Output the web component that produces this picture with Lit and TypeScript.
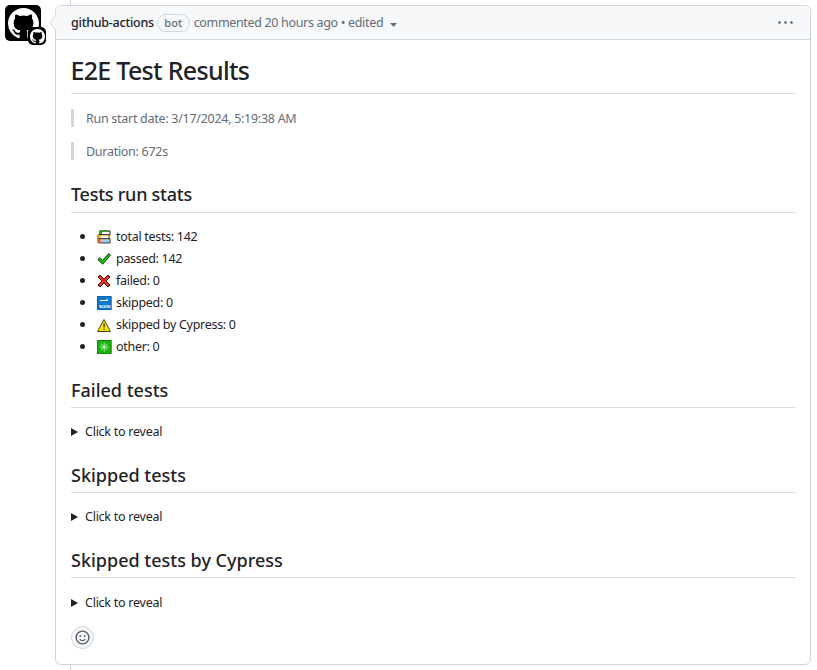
import { LitElement, html, css, svg } from "lit";
import { customElement, property } from "lit/decorators.js";

const octocat = "M8 0c4.42 0 8 3.58 8 8a8.013 8.013 0 0 1-5.45 7.59c-.4.08-.55-.17-.55-.38 0-.27.01-1.13.01-2.2 0-.75-.25-1.23-.54-1.48 1.78-.2 3.65-.88 3.65-3.95 0-.88-.31-1.59-.82-2.15.08-.2.36-1.02-.08-2.12 0 0-.67-.22-2.2.82-.64-.18-1.32-.27-2-.27-.68 0-1.36.09-2 .27-1.53-1.03-2.2-.82-2.2-.82-.44 1.1-.16 1.92-.08 2.12-.51.56-.82 1.28-.82 2.15 0 3.06 1.86 3.75 3.64 3.95-.23.2-.44.55-.51 1.07-.46.21-1.61.55-2.33-.66-.15-.24-.6-.83-1.23-.82-.67.01-.27.38.01.53.34.19.73.9.82 1.13.16.45.68 1.31 2.69.94 0 .67.01 1.3.01 1.49 0 .21-.15.45-.55.38A7.995 7.995 0 0 1 0 8c0-4.42 3.58-8 8-8Z";

const icons = {
  books: svg`<path d="M2.5 .9h10.5v4H2.5z" fill="#fff" stroke="#222"/><path d="M2 .9h3v4H2z" fill="#27a11b"/><path d="M5 1.4h8" stroke="#27a11b"/>
    <path d="M1 4.9h11v4H1z" fill="#fff" stroke="#222"/><path d="M1 5.3h3v3.2H1z" fill="#f5b82e"/><path d="M4 5.6h8" stroke="#f5b82e"/>
    <path d="M1.5 8.9H13v4H1.5z" fill="#fff" stroke="#222"/><path d="M.4 8.9h3.3v4H.4z" fill="#e8572b"/><path d="M4 11h8.5" stroke="#4e9fe0"/>`,
  check: svg`<path d="M.8 7.6 3 5.7l2.5 2.7 6.2-6.8 1.8 1.5-7.8 9.1z" fill="#16c60c" stroke="#153b13" stroke-width="1"/>`,
  cross: svg`<path d="m1 3 2-2 4 4 4-4 2 2-4 4 4 4-2 2-4-4-4 4-2-2 4-4z" fill="#e8301c" stroke="#46201b" stroke-width="1"/>`,
  soon: svg`<path d="M0 0h14.5v14H0z" fill="#0a78d0"/><path d="M.5 .5h13.5v13H.5z" fill="none" stroke="#0962ac"/>
    <path d="M3 4.5h8M9 2.7l2 1.8" fill="none" stroke="#fff"/>
    <text class="soon" x="2" y="11.8">SOON</text>`,
  warn: svg`<path d="M7 1.5 13.5 13.5H.6z" fill="#fce100" stroke="#4a4510"/><path d="M7.1 5.5v4M7.1 10.8v1.2" stroke="#222" stroke-width="1.2"/>`,
  spark: svg`<path d="M0 0h14.5v14H0z" fill="#16b60c"/><path d="M.5 .5h13.5v13H.5z" fill="none" stroke="#10870a"/>
    <path d="M7.2 2.5v9M2.7 7h9M4 3.8l6.4 6.4M10.4 3.8 4 10.2" stroke="#d9ffd5" stroke-width=".8"/>`,
};

@customElement("reveal-section")
export class RevealSection extends LitElement {
  @property() heading = "";
  static styles = css`
    :host { display: block; }
    .title { box-sizing: border-box; height: 36px; margin: 0; border-bottom: 1px solid #d8dee4;
      font-size: 18px; font-weight: 500; line-height: 36px; white-space: nowrap; letter-spacing: 0; }
    .reveal { display: flex; align-items: center; box-sizing: border-box; height: 49px; padding-bottom: 1px; }
    :host(:last-of-type) .reveal { height: 48px; padding: 1px 0 0; }
    .arrow { width: 7px; height: 8px; margin: 0 7px 0 0; fill: #1f2328; }
    .label { letter-spacing: -0.25px; }
  `;
  render() {
    return html`<h2 class="title">${this.heading}</h2>
      <div class="reveal"><svg class="arrow" viewBox="0 0 7 8"><path d="M0 0v8l7-4z" /></svg><span class="label">Click to reveal</span></div>`;
  }
}

@customElement("app-root")
export class AppRoot extends LitElement {
  static styles = css`
    :host { display: flex; box-sizing: border-box; height: 670px; padding: 5px 6px 0 5px; background: #fff; color: #1f2328;
      font: 12.5px/18px "Noto Sans", "Open Sans", sans-serif; letter-spacing: -0.3px; overflow: hidden; white-space: nowrap; }
    .avatar { position: relative; width: 36px; height: 36px; margin-right: 14px; flex: none; }
    .tile { display: flex; align-items: center; justify-content: center; width: 36px; height: 36px; border-radius: 5px; background: #000; }
    .mark { width: 31px; height: 31px; fill: #fff; }
    .badge { position: absolute; left: 23px; top: 22px; width: 18px; height: 18px; }
    .badge .mark { width: 15px; height: 15px; }
    .timeline { position: relative; flex: 1; height: 665px; }
    .line { position: absolute; left: 15px; top: -5px; width: 1px; height: 670px; background: #d0d7de; }
    .card { position: relative; box-sizing: border-box; height: 660px; border: 1px solid #d0d7de; border-radius: 6px; background: #fff; }
    .notch { position: absolute; left: -7px; top: 9px; width: 7px; height: 15px; }
    .header { display: flex; align-items: center; box-sizing: border-box; height: 34px; padding: 0 17px 0 15px;
      border-bottom: 1px solid #d0d7de; border-radius: 5px 5px 0 0; background: #f6f8fa; color: #656d76; }
    .author { color: #1f2328; font-weight: 500; letter-spacing: -0.25px; }
    .bot { box-sizing: border-box; height: 18px; margin: 0 4px 0 3px; padding: 0 6.5px; border: 1px solid #d0d7de; border-radius: 9px;
      font-size: 11px; font-weight: 500; line-height: 16px; letter-spacing: 0; }
    .when { letter-spacing: -0.33px; }
    .caret { width: 7px; height: 4px; margin: 4px 0 0 7px; fill: #656d76; }
    .dots { width: 15px; height: 3px; margin-left: auto; fill: #57606a; }
    .body { padding: 14px 14px 0 15px; }
    .h1 { box-sizing: border-box; height: 40px; margin: 0 0 15px; border-bottom: 1px solid #d8dee4; font-size: 25px; font-weight: 500; line-height: 33px; letter-spacing: -0.7px; text-indent: -0.5px; }
    .quote { box-sizing: border-box; height: 18px; margin: 0 0 15px; padding-left: 12px; border-left: 3px solid #d0d7de; color: #656d76; line-height: 20px; letter-spacing: -0.28px; }
    .h2 { box-sizing: border-box; height: 38px; margin: 0 0 13px; border-bottom: 1px solid #d8dee4; font-size: 18px; font-weight: 500; line-height: 38px; letter-spacing: -0.25px; }
    .stats { margin: 0 0 14px; padding: 0 0 0 9px; list-style: none; }
    .stat { display: flex; align-items: center; height: 22px; }
    .stat::before { content: ""; width: 5px; height: 5px; margin: 0 12px 1px 0; border-radius: 50%; background: #1f2328; }
    .icon { width: 15px; height: 14px; margin-right: 4px; }
    .soon { font: 700 4.4px "Liberation Sans", sans-serif; letter-spacing: -.5px; fill: #fff; }
    .react { display: flex; align-items: center; justify-content: center; box-sizing: border-box; width: 23px; height: 23px; border: 1px solid #d0d7de; border-radius: 50%; background: #f6f8fa; }
    .smile { width: 15px; height: 15px; fill: none; stroke: #57606a; }
  `;
  private stats = [
    { icon: icons.books, text: "total tests: 142" },
    { icon: icons.check, text: "passed: 142" },
    { icon: icons.cross, text: "failed: 0" },
    { icon: icons.soon, text: "skipped: 0" },
    { icon: icons.warn, text: "skipped by Cypress: 0" },
    { icon: icons.spark, text: "other: 0" },
  ];
  render() {
    const mark = html`<svg class="mark" viewBox="0 0 16 16"><path d=${octocat} /></svg>`;
    return html`
      <div class="avatar"><div class="tile">${mark}</div><div class="tile badge">${mark}</div></div>
      <div class="timeline">
        <div class="line"></div>
        <div class="card">
          <svg class="notch" viewBox="0 0 7 15"><path d="M7 0v15L.7 7.5z" fill="#f6f8fa" /><path d="M6.5 .5.7 7.5l5.8 7" fill="none" stroke="#d0d7de" /></svg>
          <div class="header">
            <span class="author">github-actions</span><span class="bot">bot</span>
            <span class="when">commented 20 hours ago • edited</span>
            <svg class="caret" viewBox="0 0 7 4"><path d="M0 0h7L3.5 4z" /></svg>
            <svg class="dots" viewBox="0 0 15 3"><circle cx="1.5" cy="1.5" r="1.3" /><circle cx="7.5" cy="1.5" r="1.3" /><circle cx="13.5" cy="1.5" r="1.3" /></svg>
          </div>
          <div class="body">
            <h1 class="h1">E2E Test Results</h1>
            <div class="quote"><span>Run start date: 3/17/2024, 5:19:38 AM</span></div>
            <div class="quote"><span>Duration: 672s</span></div>
            <h2 class="h2">Tests run stats</h2>
            <ul class="stats">
              ${this.stats.map((s) => html`<li class="stat"><svg class="icon" viewBox="0 0 15 14">${s.icon}</svg><span>${s.text}</span></li>`)}
            </ul>
            <reveal-section heading="Failed tests"></reveal-section>
            <reveal-section heading="Skipped tests"></reveal-section>
            <reveal-section heading="Skipped tests by Cypress"></reveal-section>
            <div class="react"><svg class="smile" viewBox="0 0 15 15"><circle cx="7.5" cy="7.5" r="6.4" stroke-width="1.4" /><path d="M4.8 9c1.2 2.2 4.2 2.2 5.4 0" stroke-width="1.2" /><circle cx="5.3" cy="6" r=".9" fill="#57606a" stroke="none" /><circle cx="9.7" cy="6" r=".9" fill="#57606a" stroke="none" /></svg></div>
          </div>
        </div>
      </div>`;
  }
}
